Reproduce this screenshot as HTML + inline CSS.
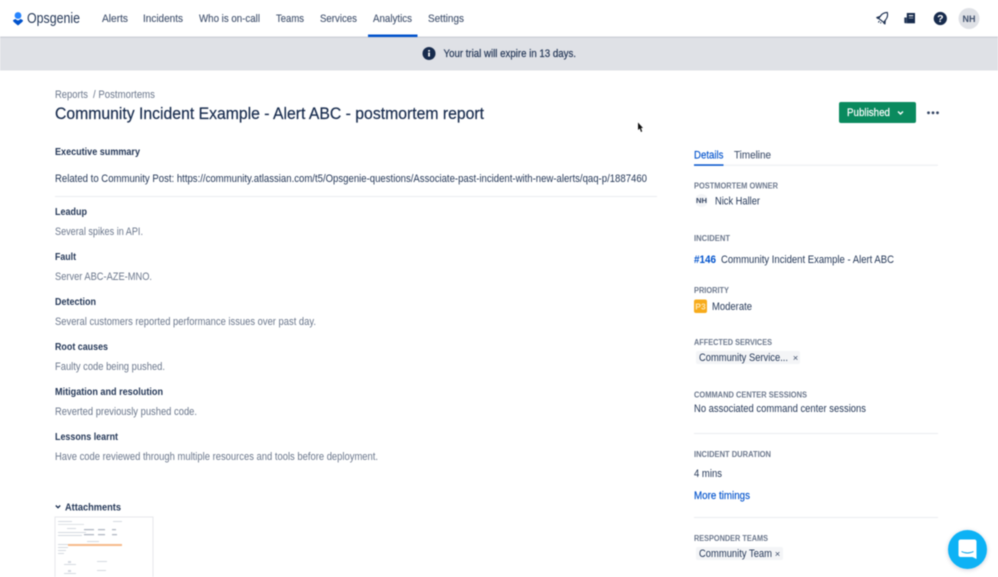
<!DOCTYPE html>
<html><head><meta charset="utf-8"><style>
html,body{margin:0;padding:0;background:#fff;width:998px;height:577px;overflow:hidden}
svg{display:block;filter:blur(.45px)}
text{font-family:"Liberation Sans",sans-serif;font-size:10.6px;fill:#344563}
.n{fill:#42526e;font-size:10.6px;stroke:#42526e;stroke-width:.12px}
.b{font-weight:bold;fill:#253858;font-size:10.4px}
.m{fill:#6b778c}
.d{fill:#172b4d}
.l{font-size:7.8px;font-weight:bold;fill:#6b778c}
.k{fill:#0052cc}
</style></head><body>
<svg width="998" height="577" viewBox="0 0 998 577" xmlns="http://www.w3.org/2000/svg">
<defs><filter id="s" x="-30%" y="-30%" width="160%" height="160%"><feDropShadow dx="0" dy="1" stdDeviation="2" flood-color="#091e42" flood-opacity=".2"/></filter></defs>
<rect width="998" height="577" fill="#fff"/>
<!-- header -->
<rect y="37" width="998" height="33.500" fill="#dfe1e6"/>
<rect y="36.500" width="998" height="1.500" fill="#cfd2d9"/>
<circle cx="18" cy="15.500" r="3.400" fill="#2684ff"/>
<path d="M18 25.500C16.400 24 14.400 22.700 13.200 21.200 12.900 20.800 13 20.300 13.400 20L15 19.100C15.400 18.900 15.800 19 16.100 19.400 16.600 20 17.300 20.400 18 20.400 18.700 20.400 19.400 20 19.900 19.400 20.200 19 20.600 18.900 21 19.100L22.600 20C23 20.300 23.100 20.800 22.800 21.200 21.600 22.700 19.600 24 18 25.500Z" fill="#0052cc"/>
<text x="27" y="23" textLength="53" lengthAdjust="spacingAndGlyphs" style="font-size:14.500px;fill:#253858">Opsgenie</text>
<text class="n" x="102" y="22" textLength="26" lengthAdjust="spacingAndGlyphs">Alerts</text>
<text class="n" x="143" y="22" textLength="40" lengthAdjust="spacingAndGlyphs">Incidents</text>
<text class="n" x="199" y="22" textLength="61" lengthAdjust="spacingAndGlyphs">Who is on-call</text>
<text class="n" x="276" y="22" textLength="28" lengthAdjust="spacingAndGlyphs">Teams</text>
<text class="n" x="320" y="22" textLength="37" lengthAdjust="spacingAndGlyphs">Services</text>
<text class="n" x="373" y="22" textLength="39" lengthAdjust="spacingAndGlyphs">Analytics</text>
<text class="n" x="428" y="22" textLength="36" lengthAdjust="spacingAndGlyphs">Settings</text>
<rect x="368" y="34.500" width="49.500" height="2.500" fill="#0052cc"/>
<!-- right header icons -->
<g transform="rotate(38 883 18)" fill="none" stroke="#172b4d" stroke-width="1.100" stroke-linejoin="round">
<path d="M883 11C885.500 13 886.200 15.500 886.200 17.500V21H879.800V17.500C879.800 15.500 880.500 13 883 11Z" fill="#fff"/>
<path d="M879.800 18.500L877.800 21.500H879.800M886.200 18.500L888.200 21.500H886.200"/>
<path d="M882 22.500V24.500M884.200 22.500V23.800" stroke-width=".9"/>
</g>
<path d="M906.800 13H915V23.300H906.800Z" fill="#172b4d"/>
<path d="M904.300 17.500H906.800V23.300H905.300C904.700 23.300 904.300 22.900 904.300 22.300Z" fill="#253858"/>
<rect x="908.800" y="15" width="4.400" height="1.300" fill="#dfe1e6"/><rect x="908.800" y="17.500" width="4.400" height="1" fill="#dfe1e6" opacity=".6"/>
<circle cx="940.300" cy="18.500" r="6.600" fill="#172b4d"/>
<text x="940.300" y="22.200" text-anchor="middle" style="font-size:10.500px;font-weight:bold;fill:#fff">?</text>
<circle cx="969" cy="18.500" r="10.500" fill="#dfe1e6"/>
<text x="969" y="22" text-anchor="middle" textLength="13" lengthAdjust="spacingAndGlyphs" style="font-size:9.500px;fill:#42526e;font-weight:bold">NH</text>
<!-- banner -->
<circle cx="429" cy="53.500" r="6.500" fill="#172b4d"/>
<rect x="428.200" y="52.500" width="1.700" height="4" fill="#fff"/><rect x="428.200" y="50" width="1.700" height="1.600" fill="#fff"/>
<text x="443.500" y="57" textLength="132.500" lengthAdjust="spacingAndGlyphs" style="fill:#253858;stroke:#253858;stroke-width:.2px">Your trial will expire in 13 days.</text>
<!-- left -->
<text class="m" x="55" y="98" textLength="33" lengthAdjust="spacingAndGlyphs">Reports</text>
<text class="m" x="93" y="98" textLength="62" lengthAdjust="spacingAndGlyphs">/ Postmortems</text>
<text class="d" x="55" y="119" textLength="429" lengthAdjust="spacingAndGlyphs" style="font-size:17px;fill:#172b4d;stroke:#172b4d;stroke-width:.2px">Community Incident Example - Alert ABC - postmortem report</text>
<text class="b" x="55" y="155" textLength="85" lengthAdjust="spacingAndGlyphs">Executive summary</text>
<text class="d" x="55" y="182" textLength="592" lengthAdjust="spacingAndGlyphs" style="fill:#253858">Related to Community Post: https://community.atlassian.com/t5/Opsgenie-questions/Associate-past-incident-with-new-alerts/qaq-p/1887460</text>
<rect x="55" y="196" width="602" height="1" fill="#ebecf0"/>
<text class="b" x="55" y="215" textLength="32" lengthAdjust="spacingAndGlyphs">Leadup</text>
<text class="m" x="55" y="235" textLength="88" lengthAdjust="spacingAndGlyphs">Several spikes in API.</text>
<text class="b" x="55" y="260" textLength="21" lengthAdjust="spacingAndGlyphs">Fault</text>
<text class="m" x="55" y="280" textLength="97" lengthAdjust="spacingAndGlyphs">Server ABC-AZE-MNO.</text>
<text class="b" x="55" y="305" textLength="41" lengthAdjust="spacingAndGlyphs">Detection</text>
<text class="m" x="55" y="325" textLength="261" lengthAdjust="spacingAndGlyphs">Several customers reported performance issues over past day.</text>
<text class="b" x="55" y="350" textLength="53" lengthAdjust="spacingAndGlyphs">Root causes</text>
<text class="m" x="55" y="370" textLength="110" lengthAdjust="spacingAndGlyphs">Faulty code being pushed.</text>
<text class="b" x="55" y="395" textLength="108" lengthAdjust="spacingAndGlyphs">Mitigation and resolution</text>
<text class="m" x="55" y="415" textLength="142" lengthAdjust="spacingAndGlyphs">Reverted previously pushed code.</text>
<text class="b" x="55" y="440" textLength="63" lengthAdjust="spacingAndGlyphs">Lessons learnt</text>
<text class="m" x="55" y="460" textLength="323" lengthAdjust="spacingAndGlyphs">Have code reviewed through multiple resources and tools before deployment.</text>
<path d="M55.800 505.500L58 507.700 60.200 505.500" fill="none" stroke="#172b4d" stroke-width="1.300"/>
<text class="b" x="65" y="510.500" textLength="56" lengthAdjust="spacingAndGlyphs">Attachments</text>
<!-- thumb -->
<rect x="55" y="517" width="98" height="70" fill="#fff" stroke="#e6e8ec" stroke-width="1"/>
<g fill="#c8cdd6" opacity=".75">
<rect x="58" y="521" width="14" height="1"/><rect x="113" y="521" width="9" height="1"/>
<rect x="58" y="524" width="26" height=".8"/>
<rect x="67" y="528" width="9" height="1"/><rect x="84" y="529" width="10" height="1.300" fill="#98a1b0"/><rect x="98" y="529" width="7" height="1.300" fill="#98a1b0"/><rect x="112" y="529" width="4" height="1.300" fill="#98a1b0"/>
<rect x="58" y="532" width="28" height="1"/><rect x="58" y="535" width="24" height="1"/>
<rect x="84" y="534" width="10" height="1.300" fill="#98a1b0"/><rect x="98" y="534" width="7" height="1.300" fill="#98a1b0"/><rect x="112" y="534" width="5" height="1.300" fill="#98a1b0"/>
<rect x="87" y="541" width="12" height="1"/>
<rect x="58" y="544" width="10" height="1"/><rect x="58" y="547" width="10" height="1"/><rect x="58" y="550" width="8" height="1"/><rect x="58" y="553" width="6" height="1"/>
<rect x="68" y="561" width="3" height="2"/><rect x="64" y="564" width="12" height="1"/><rect x="97" y="561" width="10" height="1"/>
<rect x="68" y="570" width="3" height="2"/><rect x="64" y="573" width="12" height="1"/><rect x="97" y="570" width="9" height="1"/>
</g>
<rect x="68" y="544" width="54" height="2" fill="#f6b98a"/>
<!-- published -->
<rect x="839" y="102" width="77" height="21" rx="2" fill="#0a8a5e"/>
<text x="847" y="116.200" textLength="43" lengthAdjust="spacingAndGlyphs" style="fill:#fff;stroke:#fff;stroke-width:.2px">Published</text>
<path d="M898 111.500L900.500 114 903 111.500" fill="none" stroke="#fff" stroke-width="1.400"/>
<circle cx="928.500" cy="112.800" r="1.400" fill="#344563"/><circle cx="933" cy="112.800" r="1.400" fill="#344563"/><circle cx="937.500" cy="112.800" r="1.400" fill="#344563"/>
<path d="M638 122.500V130L639.700 128.500 641 132 642.200 131.500 641 128H643Z" fill="#111"/>
<!-- right column -->
<text x="694" y="158.500" textLength="29.500" lengthAdjust="spacingAndGlyphs" style="fill:#0052cc;stroke:#0052cc;stroke-width:.15px">Details</text>
<text class="n" x="734" y="158.500" textLength="37" lengthAdjust="spacingAndGlyphs">Timeline</text>
<rect x="694" y="164.700" width="244" height="1" fill="#ebecf0"/>
<rect x="694" y="164.300" width="29.500" height="1.500" fill="#0052cc"/>
<text class="l" x="694" y="188.500" textLength="84" lengthAdjust="spacingAndGlyphs">POSTMORTEM OWNER</text>
<rect x="695" y="194" width="13" height="13" rx="6.500" fill="#f4f5f7"/>
<text x="696" y="203" textLength="11" lengthAdjust="spacingAndGlyphs" style="font-size:7.500px;font-weight:bold;fill:#344563">NH</text>
<text class="d" x="715" y="204.300" textLength="45" lengthAdjust="spacingAndGlyphs" style="fill:#253858">Nick Haller</text>
<text class="l" x="694" y="241" textLength="36" lengthAdjust="spacingAndGlyphs">INCIDENT</text>
<text x="694" y="263" textLength="22" lengthAdjust="spacingAndGlyphs" style="fill:#0052cc;font-weight:bold">#146</text>
<text x="721" y="263" textLength="173" lengthAdjust="spacingAndGlyphs" style="fill:#253858">Community Incident Example - Alert ABC</text>
<text class="l" x="694" y="293" textLength="35" lengthAdjust="spacingAndGlyphs">PRIORITY</text>
<rect x="694" y="299.500" width="13" height="13.500" rx="2" fill="#f7ab1b"/>
<text x="700.500" y="309.500" text-anchor="middle" style="font-size:8.500px;font-weight:bold;fill:#ffe6b0">P3</text>
<text x="712" y="310" textLength="40" lengthAdjust="spacingAndGlyphs" style="fill:#253858">Moderate</text>
<text class="l" x="694" y="345" textLength="78" lengthAdjust="spacingAndGlyphs">AFFECTED SERVICES</text>
<rect x="696" y="351" width="104" height="13" rx="2" fill="#f4f5f7"/>
<text x="699" y="361" textLength="89" lengthAdjust="spacingAndGlyphs" style="fill:#253858">Community Service...</text>
<text x="795.500" y="361" text-anchor="middle" style="font-size:9.500px;fill:#42526e">×</text>
<text class="l" x="694" y="397.500" textLength="113" lengthAdjust="spacingAndGlyphs">COMMAND CENTER SESSIONS</text>
<text x="694" y="412" textLength="172" lengthAdjust="spacingAndGlyphs" style="fill:#253858">No associated command center sessions</text>
<rect x="694" y="433" width="244" height="1" fill="#ebecf0"/>
<text class="l" x="694" y="457" textLength="77" lengthAdjust="spacingAndGlyphs">INCIDENT DURATION</text>
<text x="694" y="477" textLength="28" lengthAdjust="spacingAndGlyphs" style="fill:#253858">4 mins</text>
<text x="694" y="499" textLength="56" lengthAdjust="spacingAndGlyphs" style="fill:#0052cc;stroke:#0052cc;stroke-width:.15px">More timings</text>
<rect x="694" y="517" width="244" height="1" fill="#ebecf0"/>
<text class="l" x="694" y="541" textLength="74" lengthAdjust="spacingAndGlyphs">RESPONDER TEAMS</text>
<rect x="696" y="547" width="87" height="13" rx="2" fill="#f4f5f7"/>
<text x="699" y="557" textLength="73" lengthAdjust="spacingAndGlyphs" style="fill:#253858">Community Team</text>
<text x="777.500" y="557" text-anchor="middle" style="font-size:9.500px;fill:#42526e">×</text>
<!-- chat -->
<circle cx="967.500" cy="549.500" r="19.500" fill="#0ab2f5" filter="url(#s)"/>
<path d="M960.500 539.500H974.500C975.600 539.500 976.500 540.400 976.500 541.500V559L972.500 557H960.500C959.400 557 958.500 556.100 958.500 555V541.500C958.500 540.400 959.400 539.500 960.500 539.500Z" fill="#fff"/>
<path d="M961.500 551.500C965 553.500 970 553.500 973.500 551.500" fill="none" stroke="#00a0e6" stroke-width="1"/>
</svg>
</body></html>
